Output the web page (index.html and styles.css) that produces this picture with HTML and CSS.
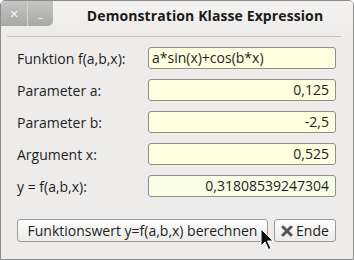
FILE: index.html
```html
<!DOCTYPE html>
<html lang="de">
<head>
    <meta charset="UTF-8">
    <title>Demonstration Klasse Expression</title>
    <link rel="stylesheet" href="styles.css">
</head>
<body>

    <div class="window">
        <!-- Title bar -->
        <header class="titlebar">
            <div class="controls">
                <span class="ctl">&#x2715;</span>
                <span class="ctl ctl-min">_</span>
            </div>
            <div class="title">Demonstration Klasse Expression</div>
        </header>

        <!-- Form -->
        <section class="panel">
            <div class="row">
                <label>Funktion f(a,b,x):</label>
                <div class="field left">a*sin(x)+cos(b*x)</div>
            </div>
            <div class="row">
                <label>Parameter a:</label>
                <div class="field">0,125</div>
            </div>
            <div class="row">
                <label>Parameter b:</label>
                <div class="field">-2,5</div>
            </div>
            <div class="row">
                <label>Argument x:</label>
                <div class="field">0,525</div>
            </div>
            <div class="row result">
                <label>y = f(a,b,x):</label>
                <div class="field out">0,31808539247304</div>
            </div>

            <div class="buttons">
                <button class="btn btn-main">Funktionswert y=f(a,b,x) berechnen</button>
                <button class="btn btn-end">
                    <svg width="12" height="12" viewBox="0 0 12 12">
                        <path d="M2 2 L10 10 M10 2 L2 10" stroke="#555" stroke-width="3" stroke-linecap="round"/>
                    </svg>
                    Ende
                </button>
            </div>
        </section>

        <!-- mouse pointer -->
        <svg class="cursor" width="16" height="24" viewBox="0 0 16 24">
            <path d="M1 1 L1 18 L5 14 L8.5 21.5 L11 20.5 L7.5 13 L13 13 Z" fill="#111" stroke="#fff" stroke-width="1"/>
        </svg>
    </div>

</body>
</html>
```

FILE: styles.css
```css
body {
    margin: 0;
    padding: 0;
    background-color: #fff;
    font-family: "Open Sans", "DejaVu Sans", sans-serif;
    font-size: 14px;
    color: #1e1e1e;
}

.window {
    position: relative;
    width: 354px;
    height: 260px;
    box-sizing: border-box;
    border: 1px solid #8d8d8d;
    border-radius: 5px 5px 0 0;
    background-color: #edeceb;
    overflow: hidden;
}

.titlebar {
    display: flex;
    align-items: flex-start;
    height: 26px;
    background: linear-gradient(#f4f3f2, #eeedec);
}

.controls {
    display: flex;
    height: 25px;
    background: linear-gradient(#c4c4c2, #a9a9a7);
    border-bottom-right-radius: 5px;
}

.ctl {
    width: 26px;
    height: 25px;
    display: flex;
    justify-content: center;
    align-items: center;
    color: #f6f6f6;
    font-size: 11px;
    font-weight: bold;
}

.ctl-min {
    border-left: 1px solid #d2d2d0;
    align-items: flex-start;
    padding-top: 4px;
    box-sizing: border-box;
}

.title {
    flex: 1;
    text-align: center;
    font-weight: bold;
    font-size: 14px;
    padding-top: 5px;
    padding-left: 4px;
    letter-spacing: 0.1px;
    color: #1a1a1a;
}

.panel {
    margin: 9px 12px 0 6px;
    border-top: 1px solid #c6c5c4;
    padding: 10px 5px 0 10px;
}

.row {
    display: flex;
    align-items: center;
    justify-content: space-between;
    height: 22px;
    margin-bottom: 10px;
}

.row.result {
    margin-top: 8px;
}

.field {
    width: 188px;
    height: 22px;
    box-sizing: border-box;
    border: 1px solid #8e8e8c;
    border-radius: 3px;
    background-color: #fffee0;
    text-align: right;
    padding: 1px 6px 0 4px;
    line-height: 18px;
    color: #1e1e1e;
}

.field.left {
    text-align: left;
    padding-left: 3px;
}

.field.out {
    background-color: #fbfee6;
}

.buttons {
    display: flex;
    gap: 6px;
    margin-top: 22px;
}

.btn {
    height: 23px;
    box-sizing: border-box;
    border: 1px solid #9b9b99;
    border-radius: 3px;
    background: linear-gradient(#fdfdfd, #ecebea);
    font-family: inherit;
    font-size: 14px;
    color: #1e1e1e;
    padding: 0 4px;
    display: flex;
    align-items: center;
    gap: 3px;
}

.btn-main {
    width: 251px;
    justify-content: center;
    white-space: nowrap;
}

.btn-end {
    width: 62px;
    justify-content: center;
}

.cursor {
    position: absolute;
    left: 259px;
    top: 227px;
}
```
